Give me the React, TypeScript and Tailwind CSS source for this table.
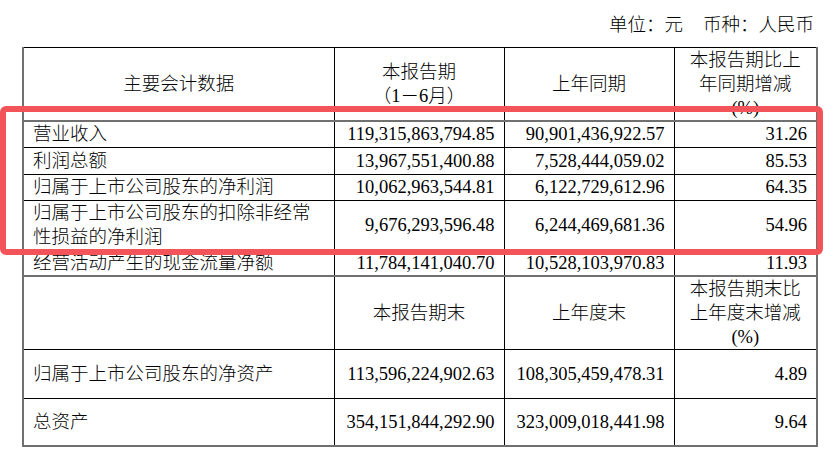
const font = "font-['Liberation_Serif','Noto_Sans_CJK_SC',serif]";

type Row = { label: React.ReactNode; a: string; b: string; c: string; h: string };

const periodRows: Row[] = [
  { label: "营业收入", a: "119,315,863,794.85", b: "90,901,436,922.57", c: "31.26", h: "h-[26px]" },
  { label: "利润总额", a: "13,967,551,400.88", b: "7,528,444,059.02", c: "85.53", h: "h-[27px]" },
  { label: "归属于上市公司股东的净利润", a: "10,062,963,544.81", b: "6,122,729,612.96", c: "64.35", h: "h-[26px]" },
  {
    label: (
      <>
        归属于上市公司股东的扣除非经常
        <br />
        性损益的净利润
      </>
    ),
    a: "9,676,293,596.48",
    b: "6,244,469,681.36",
    c: "54.96",
    h: "h-[50px]",
  },
  { label: "经营活动产生的现金流量净额", a: "11,784,141,040.70", b: "10,528,103,970.83", c: "11.93", h: "h-[26px]" },
];

const balanceRows: Row[] = [
  { label: "归属于上市公司股东的净资产", a: "113,596,224,902.63", b: "108,305,459,478.31", c: "4.89", h: "h-[49px]" },
  { label: "总资产", a: "354,151,844,292.90", b: "323,009,018,441.98", c: "9.64", h: "h-[47px]" },
];

const cell = "border border-black px-[9px] py-0 leading-[24px]";
const head = `${cell} text-center`;

function DataRow({ row }: { row: Row }) {
  return (
    <tr className={row.h}>
      <td className={`${cell} whitespace-nowrap text-left`}>{row.label}</td>
      <td className={`${cell} text-right`}>{row.a}</td>
      <td className={`${cell} text-right`}>{row.b}</td>
      <td className={`${cell} text-right`}>{row.c}</td>
    </tr>
  );
}

export default function App() {
  return (
    <div className={`relative h-[456px] w-[837px] overflow-hidden bg-white text-[18.5px] font-light text-black ${font}`}>
      <div className="ml-[22px] w-[794px] pt-[13px]">
        <div className="pr-[2px] text-right leading-[24px]">
          单位：元<span className="inline-block w-[20px]" />币种：人民币
        </div>

        <table className="mt-[10px] w-[794px] table-fixed border-collapse border-x-2 border-b-2 border-x-[#707070] border-b-[#707070]">
          <colgroup>
            <col className="w-[311px]" />
            <col className="w-[170px]" />
            <col className="w-[170px]" />
            <col className="w-[143px]" />
          </colgroup>
          <tbody>
            <tr className="h-[72px]">
              <td className={`${head} border-b-2 border-b-[#707070]`}>主要会计数据</td>
              <td className={`${head} border-b-2 border-b-[#707070]`}>
                本报告期
                <br />
                （1－6月）
              </td>
              <td className={`${head} border-b-2 border-b-[#707070]`}>上年同期</td>
              <td className={`${head} border-b-2 border-b-[#707070] px-0`}>
                本报告期比上
                <br />
                年同期增减
                <br />
                (%)
              </td>
            </tr>
            {periodRows.map((r, i) => (
              <DataRow key={i} row={r} />
            ))}
            <tr className="h-[73px]">
              <td className={`${cell} border-t-2 border-t-[#707070]`} />
              <td className={`${head} border-t-2 border-t-[#707070]`}>本报告期末</td>
              <td className={`${head} border-t-2 border-t-[#707070]`}>上年度末</td>
              <td className={`${head} border-t-2 border-t-[#707070] px-0`}>
                本报告期末比
                <br />
                上年度末增减
                <br />
                (%)
              </td>
            </tr>
            {balanceRows.map((r, i) => (
              <DataRow key={i} row={r} />
            ))}
          </tbody>
        </table>
      </div>

      {/* highlight annotation */}
      <div className="pointer-events-none absolute left-0 top-[106px] h-[149px] w-[823px] rounded-[6px] border-[6px] border-[#f2545a]" />
    </div>
  );
}
